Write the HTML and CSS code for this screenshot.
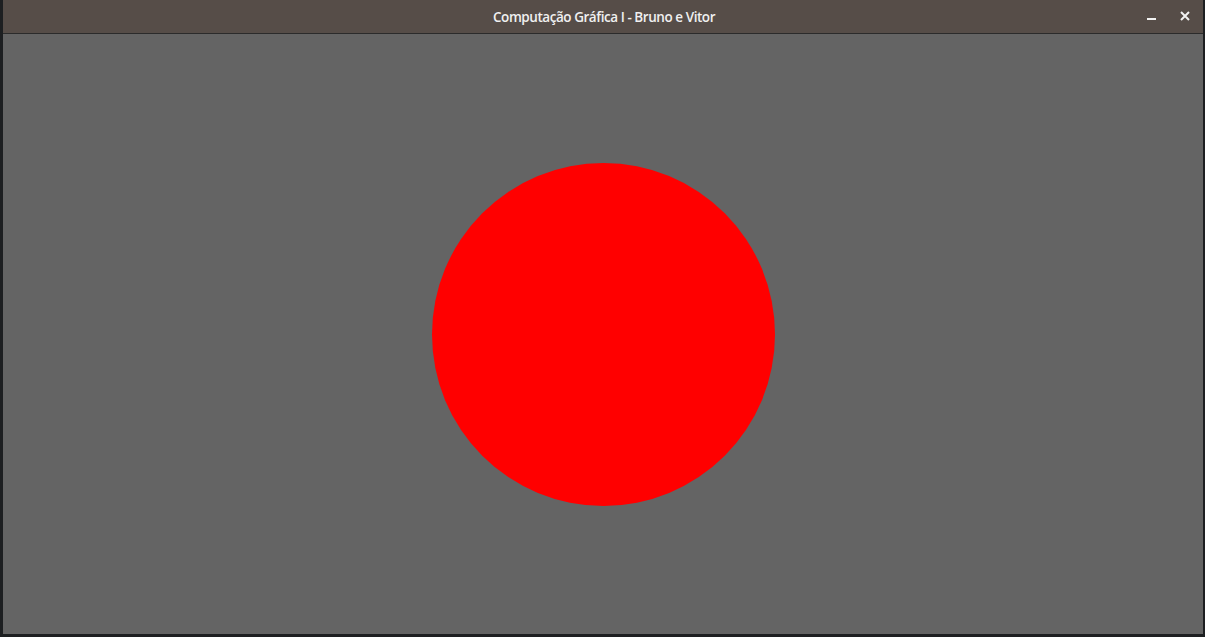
FILE: index.html
```html
<!DOCTYPE html>
<html>
<head>
<meta charset="utf-8">
<link rel="stylesheet" href="styles.css">
</head>
<body>
<div class="window">
  <div class="titlebar">
    <span class="title">Computação Gráfica I - Bruno e Vitor</span>
    <div class="controls">
      <svg class="btn" width="12" height="12" viewBox="0 0 12 12"><rect x="1" y="8" width="9" height="2" fill="#f2f2f2"/></svg>
      <svg class="btn" width="12" height="12" viewBox="0 0 12 12"><path d="M2 2 L10 10 M10 2 L2 10" stroke="#f2f2f2" stroke-width="2"/></svg>
    </div>
  </div>
  <div class="canvas">
    <div class="circle"></div>
  </div>
</div>
</body>
</html>
```
FILE: styles.css
```css
html, body {
  margin: 0;
  padding: 0;
  background: #1d1f21;
  width: 1205px;
  height: 637px;
  overflow: hidden;
}
.window {
  margin-left: 3px;
  width: 1200px;
  height: 634px;
  display: flex;
  flex-direction: column;
  background: #646464;
}
.titlebar {
  height: 33px;
  flex: 0 0 33px;
  background: #564d48;
  border-bottom: 1px solid #2b2b2b;
  display: flex;
  align-items: center;
  justify-content: center;
  position: relative;
}
.title {
  font-family: "Open Sans", sans-serif;
  font-weight: 600;
  font-size: 13.5px;
  color: #f0f0f0;
  letter-spacing: -0.45px;
  margin-left: 2px;
}
.controls {
  position: absolute;
  right: 12px;
  top: 10px;
  display: flex;
  gap: 21px;
}
.btn {
  display: block;
}
.canvas {
  flex: 1;
  display: flex;
  align-items: center;
  justify-content: center;
}
.circle {
  width: 343px;
  height: 343px;
  border-radius: 50%;
  background: #ff0000;
}
```
